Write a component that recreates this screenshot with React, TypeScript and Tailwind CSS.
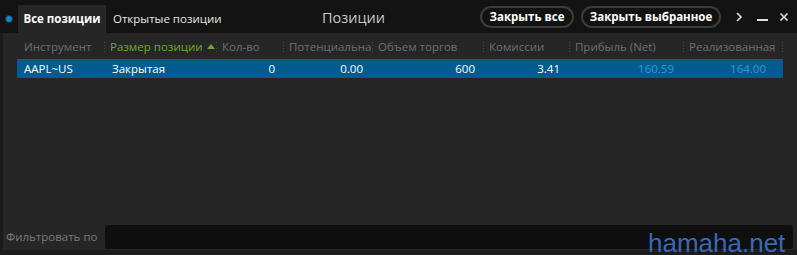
import React from "react";

const cols = [
  { label: "Инструмент", w: 80, green: false },
  { label: "Размер позиции", w: 112, green: true },
  { label: "Кол-во", w: 67, green: false },
  { label: "Потенциальна", w: 89, green: false },
  { label: "Объем торгов", w: 111, green: false },
  { label: "Комиссии", w: 86, green: false },
  { label: "Прибыль (Net)", w: 114, green: false },
  { label: "Реализованная", w: 91, green: false },
];

function Sep() {
  return (
    <span className="flex flex-col gap-[2px] mr-[5px] shrink-0">
      <span className="w-[1px] h-[1px] bg-[#4a4a4a]" />
      <span className="w-[1px] h-[1px] bg-[#4a4a4a]" />
      <span className="w-[1px] h-[1px] bg-[#4a4a4a]" />
      <span className="w-[1px] h-[1px] bg-[#4a4a4a]" />
    </span>
  );
}

export default function App() {
  return (
    <div
      className="relative w-[797px] h-[255px] bg-[#131313] flex flex-col overflow-hidden text-[11.5px]"
      style={{ fontFamily: '"Open Sans", "Noto Sans", sans-serif' }}
    >
      {/* top bar */}
      <div className="h-[33px] flex items-end relative shrink-0">
        <div className="w-[18px] h-[28px] flex items-center justify-center">
          <span className="w-[8px] h-[8px] rounded-full bg-[#1c86c8] border border-[#0b3a5a]" />
        </div>
        <div className="h-[28px] w-[88px] bg-[#262626] flex items-center justify-center text-white font-bold">
          Все позиции
        </div>
        <div className="h-[28px] flex items-center pl-[7px] text-[#e6e6e6]">
          Открытые позиции
        </div>
        <div className="absolute left-[322px] top-[7px] text-[#c8c8c8] text-[14.5px]">Позиции</div>
        <div className="ml-auto h-[33px] flex items-center gap-[7px] pr-[8px]">
          <button className="h-[22px] w-[94px] rounded-full border-2 border-[#3c3c3c] bg-[#121212] text-white font-bold flex items-center justify-center">
            Закрыть все
          </button>
          <button className="h-[22px] w-[140px] rounded-full border-2 border-[#3c3c3c] bg-[#121212] text-white font-bold flex items-center justify-center">
            Закрыть выбранное
          </button>
          <div className="flex items-center ml-[7px] text-[#e0e0e0]">
            <svg width="8" height="10" viewBox="0 0 8 10"><path d="M2 1 L6 5 L2 9" stroke="#e0e0e0" strokeWidth="1.6" fill="none" /></svg>
            <svg className="ml-[14px]" width="11" height="10" viewBox="0 0 11 10"><path d="M0 8 H11" stroke="#e0e0e0" strokeWidth="2" /></svg>
            <svg className="ml-[11px]" width="10" height="10" viewBox="0 0 10 10"><path d="M1.5 1.5 L8.5 8.5 M8.5 1.5 L1.5 8.5" stroke="#e0e0e0" strokeWidth="1.6" /></svg>
          </div>
        </div>
      </div>

      {/* body */}
      <div className="flex-1 bg-[#262626] border-l-[3px] border-[#1c1c1c] flex flex-col">
        <div className="h-[25px] mt-[1px] flex items-center pl-[21px] text-[#6e6e6e]">
          {cols.map((c, i) => (
            <div key={i} className="flex items-center shrink-0" style={{ width: c.w }}>
              {i > 0 && <Sep />}
              <span className={c.green ? "text-[#6fa82c] whitespace-nowrap" : "whitespace-nowrap"}>{c.label}</span>
              {c.green && (
                <svg className="ml-[4px]" width="8" height="5" viewBox="0 0 8 5"><path d="M0 5 L4 0 L8 5Z" fill="#6fa82c" /></svg>
              )}
            </div>
          ))}
          <div className="w-[8px] flex"><Sep /></div>
          <Sep />
        </div>
        <div className="ml-[14px] w-[766px] h-[19px] bg-[#045b8e] flex items-center text-white">
          <span className="w-[95px] pl-[7px]">AAPL~US</span>
          <span className="w-[95px]">Закрытая</span>
          <span className="w-[68px] text-right">0</span>
          <span className="w-[88px] text-right">0.00</span>
          <span className="w-[112px] text-right">600</span>
          <span className="w-[85px] text-right">3.41</span>
          <span className="w-[114px] text-right text-[#2d9ad8]">160.59</span>
          <span className="w-[92px] text-right text-[#2d9ad8]">164.00</span>
        </div>
        <div className="flex-1" />
        <div className="h-[24px] flex items-center mb-[1px]">
          <span className="w-[102px] pl-[3px] text-[#7a7a7a]">Фильтровать по</span>
          <div className="flex-1 mr-[4px] h-[24px] rounded-[3px] bg-[#0f0f0f]" />
        </div>
      </div>
      <div className="h-[5px] bg-[#1c1c1c] shrink-0" />

      <div
        className="absolute left-[648px] top-[230px] text-[#3a67b8] text-[26px] leading-none"
        style={{ fontFamily: '"Liberation Sans", Arial, sans-serif' }}
      >
        hamaha.net
      </div>
    </div>
  );
}
